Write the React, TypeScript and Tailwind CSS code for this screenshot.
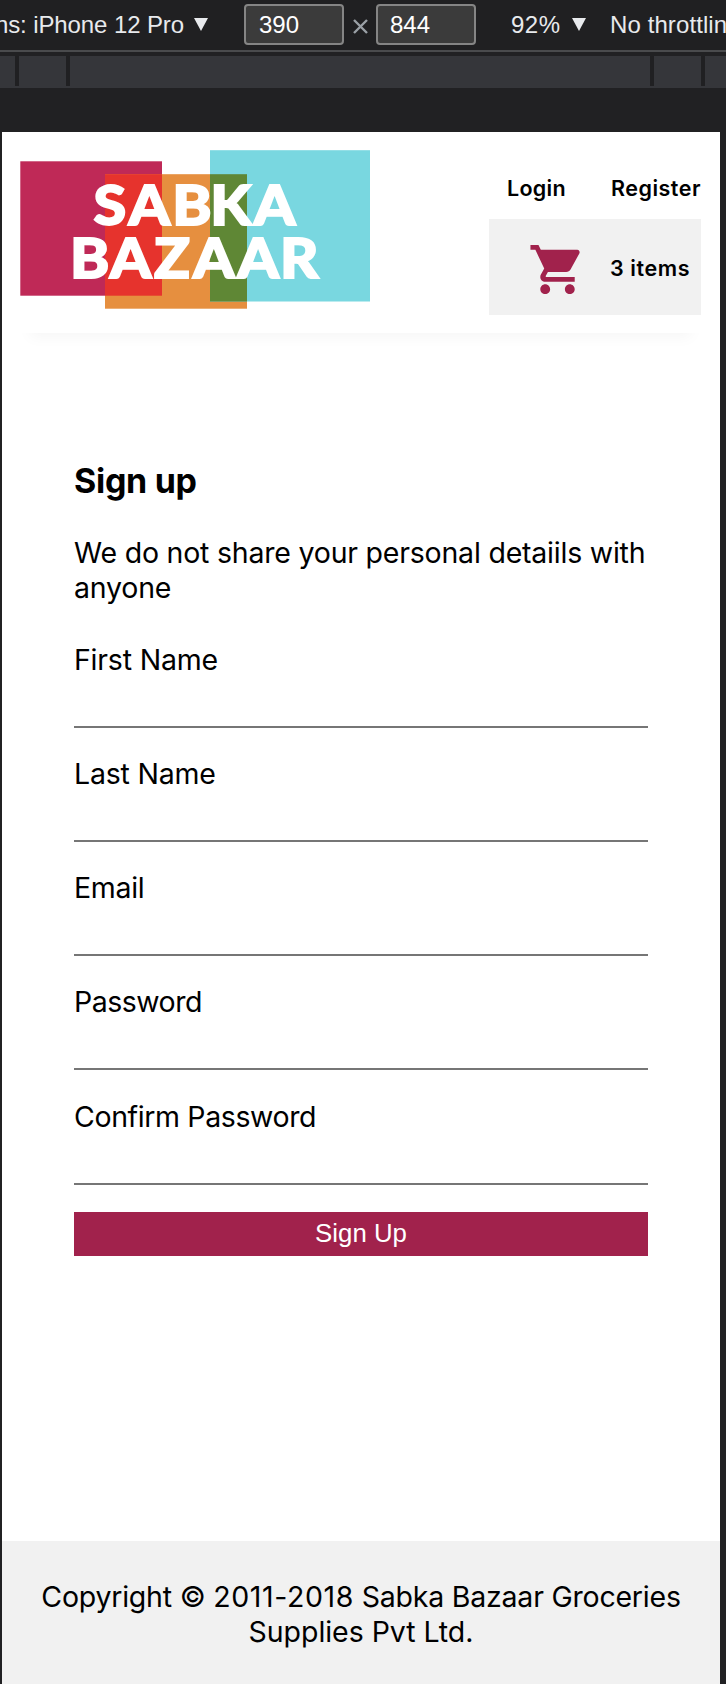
import { MdShoppingCart } from "react-icons/md";

const fields = [
  { id: "first", label: "First Name", type: "text", labelClass: "tracking-[-0.2px]" },
  { id: "last", label: "Last Name", type: "text", labelClass: "tracking-[-0.2px]" },
  { id: "email", label: "Email", type: "email", labelClass: "tracking-[-0.3px]" },
  { id: "password", label: "Password", type: "password", labelClass: "tracking-[-0.5px]" },
  { id: "confirm", label: "Confirm Password", type: "password", labelClass: "tracking-[-0.38px]" },
];

function Triangle() {
  return (
    <svg width="14" height="13" viewBox="0 0 14 13" className="shrink-0">
      <path d="M0 0H14L7 13Z" fill="#e8eaed" />
    </svg>
  );
}

function DeviceToolbar() {
  return (
    <div className="flex h-[52px] shrink-0 items-start overflow-hidden border-b-2 border-[#4a4b4d] bg-[#202022] text-[24px] leading-[50px] whitespace-nowrap text-[#e8eaed]">
      <div className="flex w-[184px] shrink-0 justify-end tracking-[-0.1px]">
        <span>Dimensions: iPhone 12 Pro</span>
      </div>
      <div className="ml-[10px] pt-[18px]"><Triangle /></div>
      <div className="mt-1 ml-[36px] h-[41px] w-[100px] shrink-0 rounded-[4px] border-2 border-[#858585] bg-[#3b3b3b] pl-[13px] text-[24px] leading-[37px] text-white">390</div>
      <svg width="15" height="15" viewBox="0 0 15 15" className="mt-[19px] ml-[9px] shrink-0">
        <path d="M1 1L14 14M14 1L1 14" stroke="#9aa0a6" strokeWidth="2.4" />
      </svg>
      <div className="mt-1 ml-[8px] h-[41px] w-[100px] shrink-0 rounded-[4px] border-2 border-[#858585] bg-[#3b3b3b] pl-[12px] text-[24px] leading-[37px] text-white">844</div>
      <span className="ml-[35px] w-[49px] shrink-0 tracking-[0.5px]">92%</span>
      <div className="ml-[12px] pt-[18px]"><Triangle /></div>
      <span className="ml-[24px] tracking-[0.1px]">No throttling</span>
    </div>
  );
}

function Ruler() {
  return (
    <div className="mt-1 flex h-8 shrink-0 items-start bg-[#35363a]">
      <div className="ml-[15px] h-[30px] w-1 bg-[#202022]" />
      <div className="ml-[47px] h-[30px] w-1 bg-[#202022]" />
      <div className="ml-[580px] h-[30px] w-1 bg-[#202022]" />
      <div className="ml-[47px] h-[30px] w-1 bg-[#202022]" />
    </div>
  );
}

function Logo() {
  return (
    <svg width="350" height="160" viewBox="20 150 350 160" className="block shrink-0">
      <rect x="20.3" y="161.3" width="141.7" height="134.4" fill="#bf2957" />
      <rect x="105" y="174.2" width="142" height="134.5" fill="#e68f3f" />
      <rect x="105" y="174.2" width="57" height="121.5" fill="#e6332d" />
      <rect x="210" y="150.2" width="160" height="151.3" fill="#79d7e0" />
      <rect x="210" y="174.2" width="37" height="127.3" fill="#5f8735" />
      <g transform="scale(1.07 1)" fill="#ffffff" stroke="#ffffff" strokeWidth="1.8" fontFamily="Lato, sans-serif" fontWeight="900" fontSize="55.5">
        <text x="87.5 120 161 196.6 237.2" y="225.3">SABKA</text>
        <text x="65.4 102.5 144 180.4 221.7 261.8" y="278.5">BAZAAR</text>
      </g>
    </svg>
  );
}

function Header() {
  return (
    <header className="mr-[19px] ml-[18px] flex h-[201px] shrink-0 items-start justify-between shadow-[0_14px_14px_-10px_rgba(0,0,0,0.04)]">
      <div className="pt-[18px]"><Logo /></div>
      <div className="w-[212px] pt-[40px]">
        <nav className="flex h-[47px] justify-between pl-[18px] text-[21.5px] leading-8 font-[560]">
          <a className="tracking-[0.3px]">Login</a>
          <a className="tracking-[0.5px]">Register</a>
        </nav>
        <div className="flex h-24 items-center bg-[#f1f1f1] pl-[39px]">
          <MdShoppingCart className="mt-[4px] size-[59px] shrink-0 text-[#a1224c]" />
          <span className="mt-[2px] ml-[23px] text-[21.5px] leading-8 font-[560] tracking-[0.6px] whitespace-nowrap">3 items</span>
        </div>
      </div>
    </header>
  );
}

export default function App() {
  return (
    <div className="flex h-[1684px] w-[726px] flex-col overflow-hidden bg-[#212123] font-['Liberation_Sans',Arial,sans-serif]">
      <DeviceToolbar />
      <Ruler />
      <div className="mt-11 mr-[6px] ml-[2px] flex flex-1 flex-col bg-white font-['Inter',sans-serif] text-[28.5px] leading-[35px] text-black">
        <Header />
        <main className="mx-[72px] flex-1 pt-[128px]">
          <h1 className="text-[34px] leading-[40px] font-bold tracking-[-0.3px]">Sign up</h1>
          <p className="mt-[34px] tracking-[-0.21px] whitespace-nowrap">We do not share your personal detaiils with<br />anyone</p>
          <form className="mt-[37px]">
            {fields.map((field) => (
              <div key={field.id} className="h-[114.13px]">
                <label htmlFor={field.id} className={`block ${field.labelClass}`}>{field.label}</label>
                <input id={field.id} type={field.type} className="block h-[51px] w-full border-b-2 border-[#767676] bg-transparent outline-none" />
              </div>
            ))}
            <button type="button" className="-mt-px block h-11 w-full bg-[#a1224c] font-['Liberation_Sans',Arial,sans-serif] text-[25.8px] leading-[41px] text-white">Sign Up</button>
          </form>
        </main>
        <footer className="h-[143px] shrink-0 bg-[#f1f1f1] pt-[38px] text-center tracking-[-0.22px]">
          Copyright © <span className="tracking-[0.6px]">2011-2018</span> Sabka Bazaar Groceries<br /><span className="tracking-[-0.05px]">Supplies Pvt Ltd.</span>
        </footer>
      </div>
    </div>
  );
}
